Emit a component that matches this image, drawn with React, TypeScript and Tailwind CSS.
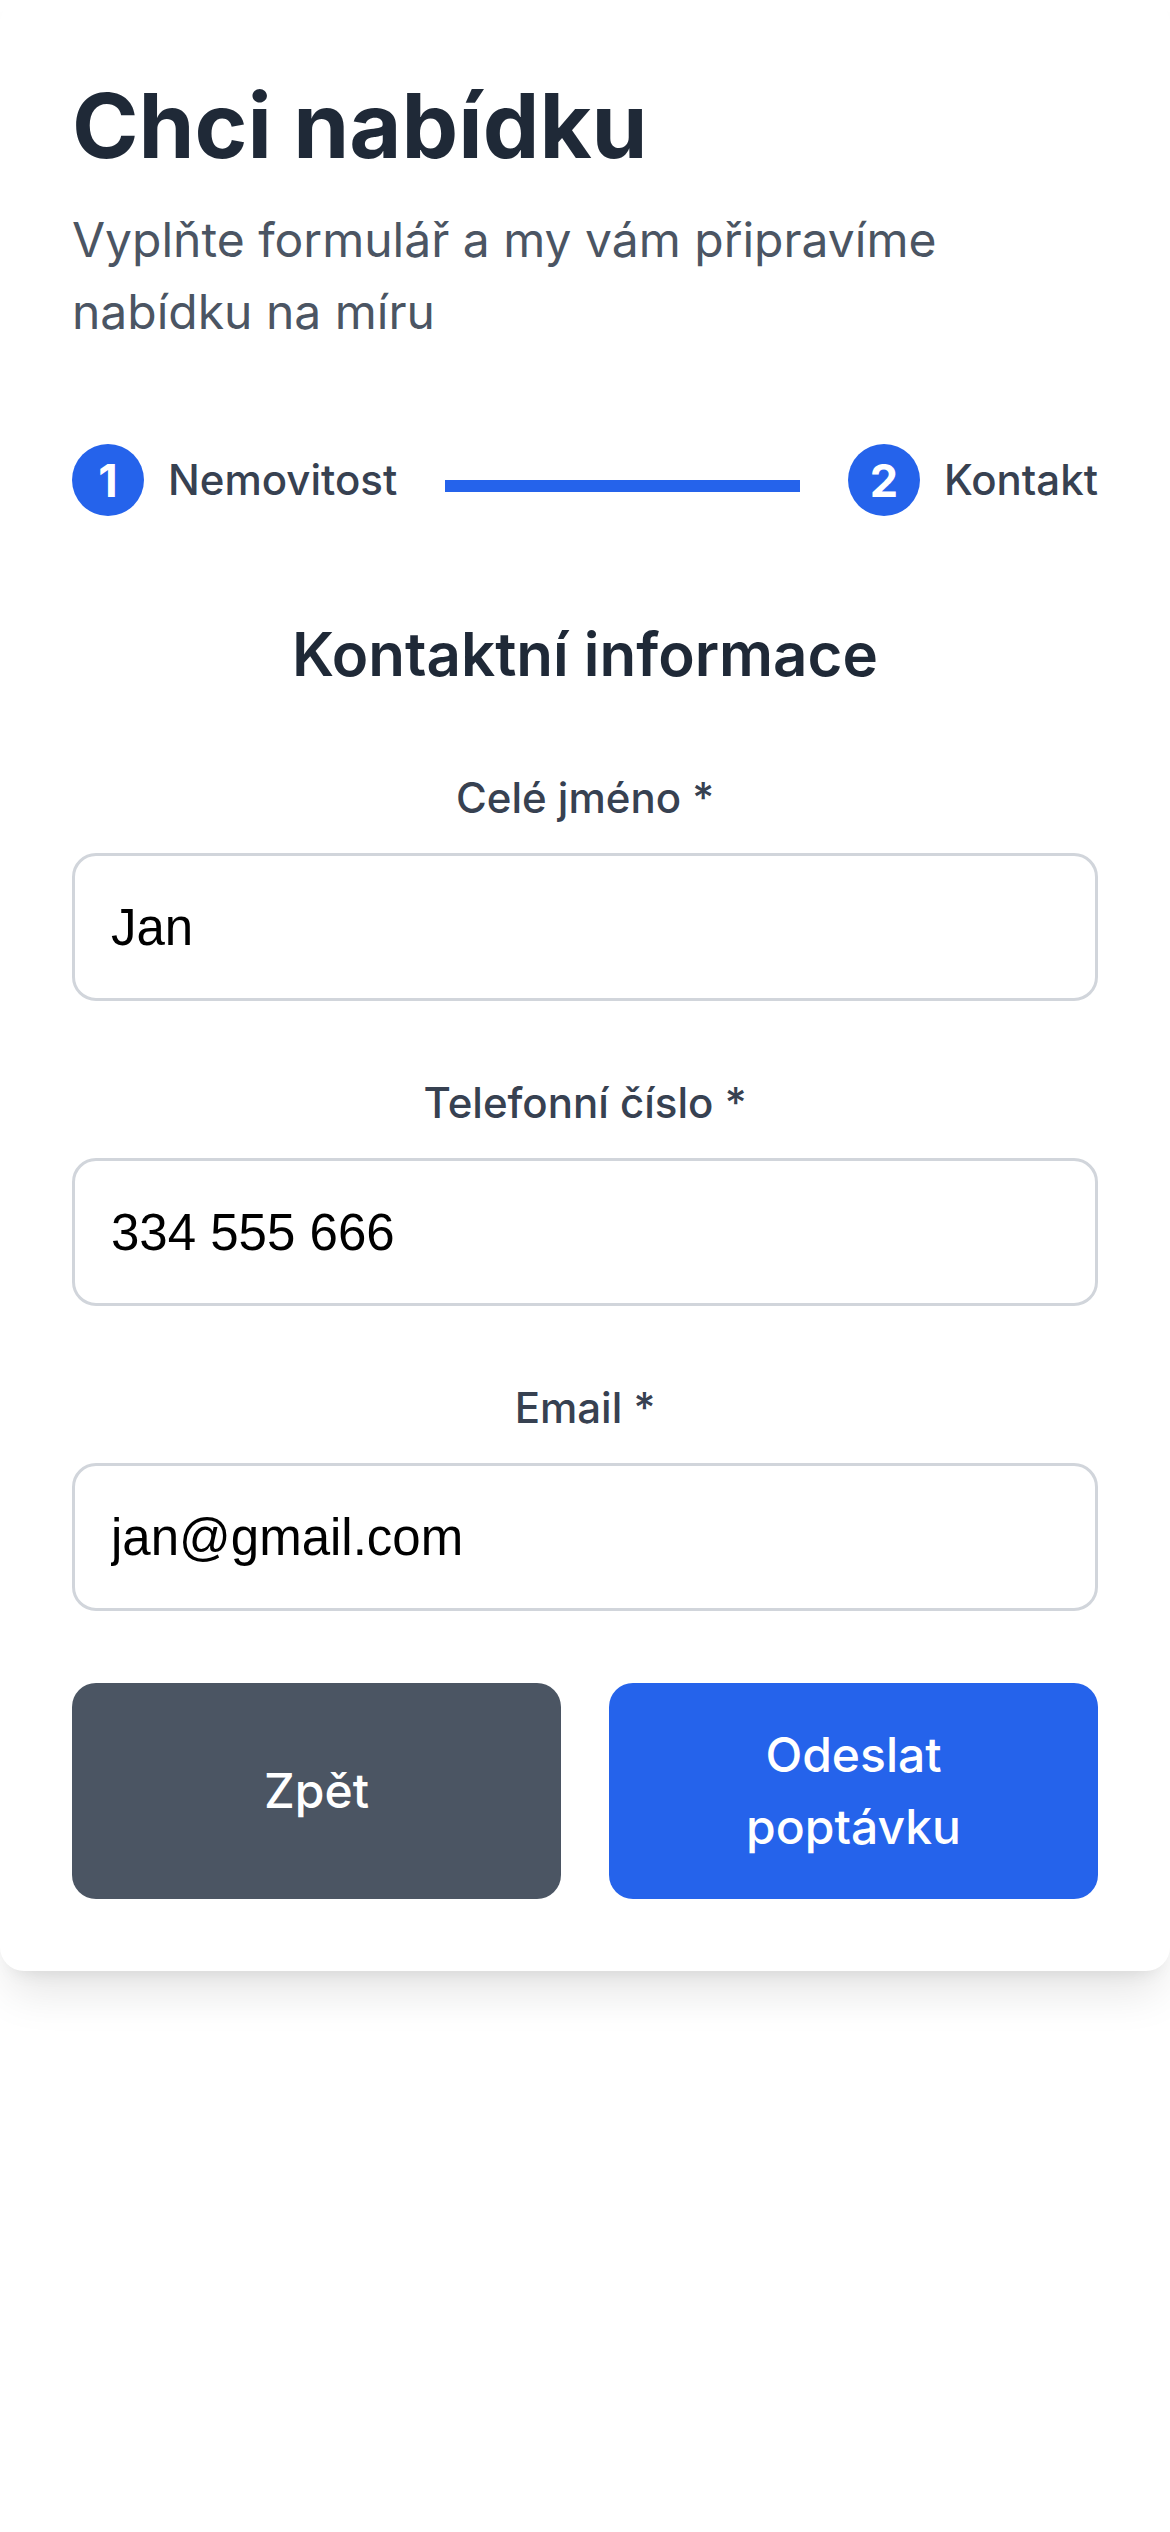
import React from "react";

const fields = [
  { label: "Celé jméno *", value: "Jan", type: "text" },
  { label: "Telefonní číslo *", value: "334 555 666", type: "tel" },
  { label: "Email *", value: "jan@gmail.com", type: "email" },
];

function Step({ n, label }: { n: number; label: string }) {
  return (
    <div className="flex items-center shrink-0">
      <div className="h-[72px] w-[72px] rounded-full bg-[#2563eb] flex items-center justify-center text-white text-[45px] font-bold leading-none">
        {n}
      </div>
      <span className="ml-[24px] text-[42px] leading-[60px] font-medium text-[#374151]">{label}</span>
    </div>
  );
}

export default function App() {
  return (
    <div className="min-h-screen w-full bg-white font-['Inter',sans-serif]">
      <div className="bg-white rounded-[24px] px-[72px] pt-[72px] pb-[72px] shadow-[0_30px_45px_-9px_rgba(0,0,0,0.1),0_12px_18px_-12px_rgba(0,0,0,0.1)]">
        {/* Header */}
        <h1 className="text-[90px] leading-[108px] font-bold text-[#1f2937]">Chci nabídku</h1>
        <p className="mt-[24px] text-[48px] leading-[72px] text-[#4b5563]">
          Vyplňte formulář a my vám připravíme nabídku na míru
        </p>

        {/* Stepper */}
        <div className="mt-[96px] flex items-center">
          <Step n={1} label="Nemovitost" />
          <div className="flex-1 mx-[48px] mt-[12px] h-[12px] bg-[#2563eb]" />
          <Step n={2} label="Kontakt" />
        </div>

        <h2 className="mt-[96px] text-center text-[60px] leading-[84px] font-semibold text-[#1f2937]">
          Kontaktní informace
        </h2>

        {/* Form */}
        <form className="mt-[72px] flex flex-col gap-[72px]" onSubmit={(e) => e.preventDefault()}>
          {fields.map((f) => (
            <div key={f.label}>
              <label className="block mb-[25px] text-center text-[42px] leading-[60px] font-medium text-[#374151]">
                {f.label}
              </label>
              <input
                type={f.type}
                defaultValue={f.value}
                className="block w-full h-[148px] px-[36px] rounded-[24px] border-[3px] border-[#d1d5db] bg-white text-[51px] text-black font-['Liberation_Sans',Arial,sans-serif] outline-none"
              />
            </div>
          ))}
        </form>

        {/* Buttons */}
        <div className="mt-[72px] grid grid-cols-2 gap-[48px]">
          <button className="flex items-center justify-center rounded-[24px] bg-[#4b5563] px-[72px] py-[36px] text-[48px] leading-[72px] font-medium text-white">
            Zpět
          </button>
          <button className="flex items-center justify-center rounded-[24px] bg-[#2563eb] px-[72px] py-[36px] text-[48px] leading-[72px] font-medium text-white text-center">
            Odeslat poptávku
          </button>
        </div>
      </div>
    </div>
  );
}
